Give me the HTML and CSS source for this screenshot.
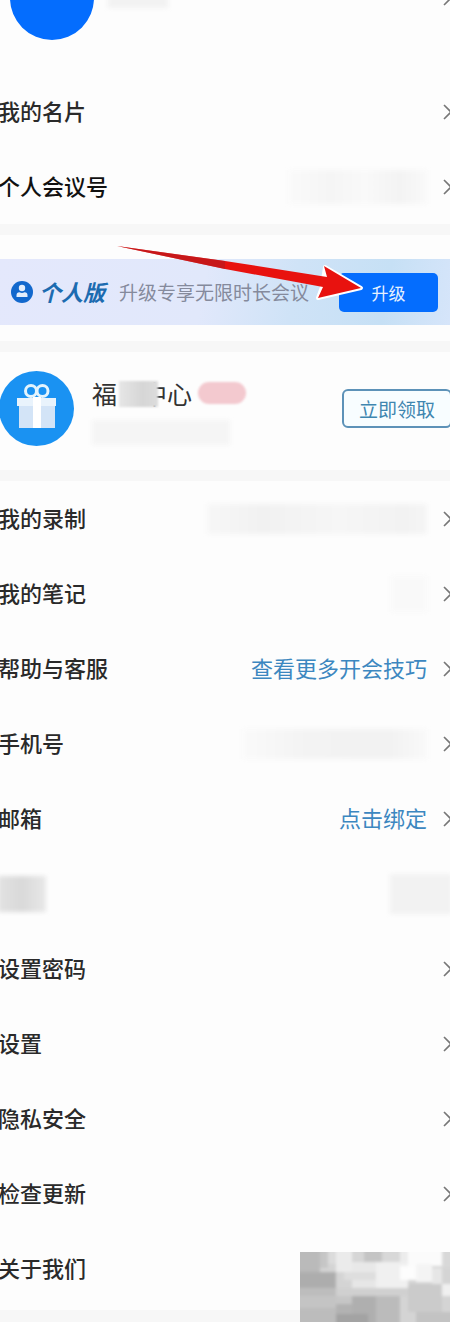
FILE: index.html
```html
<!DOCTYPE html>
<html lang="zh-CN">
<head>
<meta charset="utf-8">
<meta name="viewport" content="width=device-width, initial-scale=1">
<title>个人中心</title>
<link rel="stylesheet" href="styles.css">
</head>
<body>
<svg class="defs" width="0" height="0">
  <symbol id="chevron" viewBox="0 0 9 16"><path d="M1 1l7 7-7 7" fill="none" stroke="#777" stroke-width="1.6"/></symbol>
</svg>
<main class="page">
  <!-- 头像和名片 -->
  <section>
    <div class="profile">
      <span class="avatar"></span>
      <span class="mask mask-name"></span>
      <svg class="chevron"><use href="#chevron"/></svg>
    </div>
    <a class="row" href="#card"><span class="label">我的名片</span><svg class="chevron"><use href="#chevron"/></svg></a>
    <a class="row" href="#meeting"><span class="label strong">个人会议号</span><span class="mask mask-meeting"></span><svg class="chevron"><use href="#chevron"/></svg></a>
  </section>

  <!-- 升级横幅 -->
  <section class="upgrade">
    <div class="banner">
      <svg class="user-icon" viewBox="0 0 22 22">
        <circle cx="11" cy="11" r="11" fill="#1268cd"/>
        <circle cx="11" cy="7" r="3.200" fill="#e4eefc"/>
        <path d="M5.500 16v-1.800a3 3 0 0 1 3-3q2.500 1.400 5 0a3 3 0 0 1 3 3V16z" fill="#e4eefc"/>
      </svg>
      <strong class="plan">个人版</strong>
      <span class="plan-text">升级专享无限时长会议</span>
      <button class="btn-upgrade" type="button">升级</button>
      <svg class="arrow" viewBox="112 240 256 64">
        <path d="M325 267L361 288 318 298 322 287z" fill="#fff" stroke="#fff" stroke-width="4" stroke-linejoin="round"/>
        <path d="M117 246L225 261 327 277 324 266 361 288 318 298 323 287 225 269z" fill="#e8120f"/>
        <path d="M117 246L225 261 225 269z" fill="#b01a20" opacity=".6"/>
      </svg>
    </div>
  </section>

  <!-- 福利 -->
  <section class="welfare">
    <svg class="gift" viewBox="0 0 75 75">
      <circle cx="37.500" cy="37.500" r="37.500" fill="#1a92f2"/>
      <g fill="none" stroke="#e4f4fd" stroke-width="3">
        <circle cx="32" cy="20" r="5.500"/><circle cx="43.500" cy="20" r="5.500"/>
      </g>
      <path d="M20 34h36v23H20z" fill="#d3e4f7"/>
      <path d="M18 27h39v8H18z" fill="#e9f3fc"/>
      <path d="M34 26h8v31h-8z" fill="#fff"/>
    </svg>
    <div class="welfare-info">
      <div class="welfare-title">
        <span>福</span><span class="title-rest">中心</span>
        <span class="mask mask-title"></span>
        <span class="pill"></span>
      </div>
      <span class="mask mask-sub"></span>
    </div>
    <button class="btn-claim" type="button">立即领取</button>
  </section>

  <!-- 功能列表 -->
  <section class="list">
    <a class="row" href="#record"><span class="label">我的录制</span><span class="mask mask-record"></span><svg class="chevron"><use href="#chevron"/></svg></a>
    <a class="row" href="#notes"><span class="label">我的笔记</span><span class="mask mask-notes"></span><svg class="chevron"><use href="#chevron"/></svg></a>
    <a class="row" href="#help"><span class="label">帮助与客服</span><span class="value">查看更多开会技巧</span><svg class="chevron"><use href="#chevron"/></svg></a>
    <a class="row" href="#phone"><span class="label">手机号</span><span class="mask mask-phone"></span><svg class="chevron"><use href="#chevron"/></svg></a>
    <a class="row" href="#mail"><span class="label">邮箱</span><span class="value">点击绑定</span><svg class="chevron"><use href="#chevron"/></svg></a>
    <div class="row"><span class="mask mask-left"></span><span class="mask mask-right"></span></div>
    <a class="row" href="#password"><span class="label">设置密码</span><svg class="chevron"><use href="#chevron"/></svg></a>
    <a class="row" href="#settings"><span class="label">设置</span><svg class="chevron"><use href="#chevron"/></svg></a>
    <a class="row" href="#privacy"><span class="label">隐私安全</span><svg class="chevron"><use href="#chevron"/></svg></a>
    <a class="row" href="#update"><span class="label">检查更新</span><svg class="chevron"><use href="#chevron"/></svg></a>
    <a class="row" href="#about"><span class="label">关于我们</span></a>
  </section>

  <!-- 右下角马赛克 -->
  <svg class="mosaic" viewBox="0 0 150 70">
    <defs><filter id="soft" x="0" y="0" width="1" height="1"><feGaussianBlur stdDeviation="1.5"/></filter></defs>
    <rect width="150" height="70" fill="#d4d4d4"/>
    <g filter="url(#soft)">
      <path d="M-8-8h166v86H-8z" fill="#d4d4d4"/>
      <path d="M-8-8h28v86H-8z" fill="#bababa"/>
      <path d="M20-8h8v24h-8z" fill="#c6c6c6"/>
      <path d="M28-8h8v20h-8z" fill="#dcdcdc"/>
      <path d="M-8 20h44v16H-8z" fill="#adadad"/>
      <path d="M-8 36h44v8H-8z" fill="#bdbdbd"/>
      <path d="M-8 44h44v12H-8z" fill="#c4c4c4"/>
      <path d="M-8 56h44v22H-8z" fill="#bcbcbc"/>
      <path d="M36-8h16v28H36z" fill="#ebebeb"/>
      <path d="M52-8h12v18H52z" fill="#d6d6d6"/>
      <path d="M64-8h18v18H64z" fill="#c4c4c4"/>
      <path d="M82-8h18v18H82z" fill="#d8d8d8"/>
      <path d="M100-8h8v20h-8z" fill="#ececec"/>
      <path d="M108-8h34v22h-34z" fill="#fbfbfb"/>
      <path d="M142-8h16v24h-16z" fill="#d8d8d8"/>
      <path d="M52 10h24v10H52z" fill="#e8e8e8"/>
      <path d="M44 20h32v8H44z" fill="#dedede"/>
      <path d="M52 28h24v8H52z" fill="#e6e6e6"/>
      <path d="M76 10h32v26H76z" fill="#f0f0f0"/>
      <path d="M100 14h16v14h-16z" fill="#fdfdfd"/>
      <path d="M116 12h16v18h-16z" fill="#f4f4f4"/>
      <path d="M132 16h10v16h-10z" fill="#e6e6e6"/>
      <path d="M36 36h72v8H36z" fill="#d0d0d0"/>
      <path d="M36 44h16v8H36z" fill="#c6c6c6"/>
      <path d="M52 44h24v34H52z" fill="#afafaf"/>
      <path d="M76 44h24v34H76z" fill="#bbbbbb"/>
      <path d="M36 52h16v10H36z" fill="#b2b2b2"/>
      <path d="M36 62h32v16H36z" fill="#a3a3a3"/>
      <path d="M108 32h34v28h-34z" fill="#cbcbcb"/>
      <path d="M116 60h42v18h-42z" fill="#c3c3c3"/>
      <path d="M142 32h16v12h-16z" fill="#f0f0f0"/>
    </g>
  </svg>
</main>
</body>
</html>
```
FILE: styles.css
```css
* { box-sizing: border-box; }

body {
  margin: 0;
  background: #f7f7f7;
  color: #2a2a2a;
  font-family: "Noto Sans CJK SC", sans-serif;
  font-size: 22px;
}

.defs { position: absolute; }

.page {
  position: relative;
  display: flex;
  flex-direction: column;
  gap: 11px;
  padding-bottom: 12px;
  overflow: hidden;
}

section { background: #fdfdfd; }

/* 头像 */
.profile {
  display: flex;
  align-items: center;
  gap: 14px;
  margin-top: -44px;
  padding: 0 0 34px 10px;
}
.avatar {
  width: 84px;
  height: 84px;
  border-radius: 50%;
  background: #046dfe;
}

/* 列表行 */
.row {
  display: flex;
  align-items: center;
  height: 75px;
  color: inherit;
  text-decoration: none;
}
.label,
.value { padding-bottom: 4px; }
.label {
  margin-left: -2px;
  font-weight: 500;
}
.strong { color: #111; }
.value {
  margin-left: auto;
  color: #3c87c0;
}
.chevron {
  width: 9px;
  height: 16px;
  margin-left: auto;
  margin-right: -2px;
  flex: none;
}
.value + .chevron,
.row .mask + .chevron { margin-left: 16px; }

/* 模糊遮挡块 */
.mask {
  background: #f2f2f2;
  filter: blur(2px);
}
.mask-name { width: 60px; height: 20px; }
.mask-meeting {
  width: 138px;
  height: 34px;
  margin-left: auto;
  background: linear-gradient(90deg, #fafafa, #f5f5f5 30%, #f9f9f9 55%, #f3f3f3 80%, #f9f9f9);
}
.mask-record {
  width: 220px;
  height: 30px;
  margin-left: auto;
  background: linear-gradient(90deg, #f7f7f7, #f1f1f1 25%, #f6f6f6 60%, #f2f2f2 90%, #f5f5f5);
}
.mask-notes {
  width: 36px;
  height: 36px;
  margin-left: auto;
  background: #f9f9f9;
}
.mask-phone {
  width: 184px;
  height: 30px;
  margin-left: auto;
  background: linear-gradient(90deg, #fafafa, #f3f3f3 35%, #f2f2f2 80%, #f9f9f9);
}
.mask-left {
  width: 48px;
  height: 36px;
  margin-left: -2px;
  background: linear-gradient(90deg, #e2e2e2, #d9d9d9 50%, #e8e8e8);
}
.mask-right {
  width: 62px;
  height: 40px;
  margin-left: auto;
  margin-right: -2px;
}

/* 升级横幅 */
.upgrade { padding: 24px 0 16px; }
.banner {
  position: relative;
  display: flex;
  align-items: center;
  height: 66px;
  padding: 0 12px 0 11px;
  background: linear-gradient(100deg, #e4e8fc 0%, #e1e8fb 45%, #cfe3f7 65%, #c6e0f5 85%, #d6e5fa 100%);
}
.user-icon {
  width: 22px;
  height: 22px;
  margin-right: 6px;
}
.plan {
  margin-right: 14px;
  color: #1c6bb0;
  font-style: italic;
}
.plan,
.plan-text { padding-bottom: 2px; }
.plan-text {
  color: #858a9c;
  font-size: 19px;
}
.btn-upgrade {
  width: 99px;
  height: 39px;
  margin-left: auto;
  padding: 0;
  border: 0;
  border-radius: 5px;
  background: #046dfe;
  color: #e6f1ff;
  font: inherit;
  font-size: 17px;
}
.arrow {
  position: absolute;
  top: -19px;
  left: 112px;
  width: 256px;
  height: 64px;
}

/* 福利 */
.welfare {
  display: flex;
  padding: 19px 0 24px;
}
.gift {
  width: 75px;
  height: 75px;
  margin-left: -1px;
  flex: none;
}
.welfare-info {
  display: flex;
  flex-direction: column;
  gap: 12px;
  margin-left: 18px;
  padding-top: 7px;
}
.welfare-title {
  position: relative;
  display: flex;
  align-items: center;
  height: 30px;
  color: #333;
  font-size: 25px;
}
.title-rest { margin-left: 1em; }
.mask-title {
  position: absolute;
  top: 3px;
  left: 27px;
  width: 39px;
  height: 26px;
  background: linear-gradient(90deg, #e6e6e6, #d6d6d6 60%, #dcdcdc);
  filter: blur(1px);
}
.pill {
  width: 48px;
  height: 22px;
  margin-left: 6px;
  border-radius: 11px;
  background: #f3c9cf;
  filter: blur(1px);
}
.mask-sub {
  width: 138px;
  height: 25px;
  background: #f5f5f5;
}
.btn-claim {
  width: 110px;
  height: 39px;
  margin: 18px -2px 0 auto;
  padding: 0;
  border: 2px solid #5d92b8;
  border-radius: 6px;
  background: #f8fdff;
  color: #3f86b0;
  font: inherit;
  font-size: 19px;
}

.list { padding-bottom: 4px; }

.mosaic {
  position: absolute;
  right: 0;
  bottom: 0;
  width: 150px;
  height: 70px;
}
```
